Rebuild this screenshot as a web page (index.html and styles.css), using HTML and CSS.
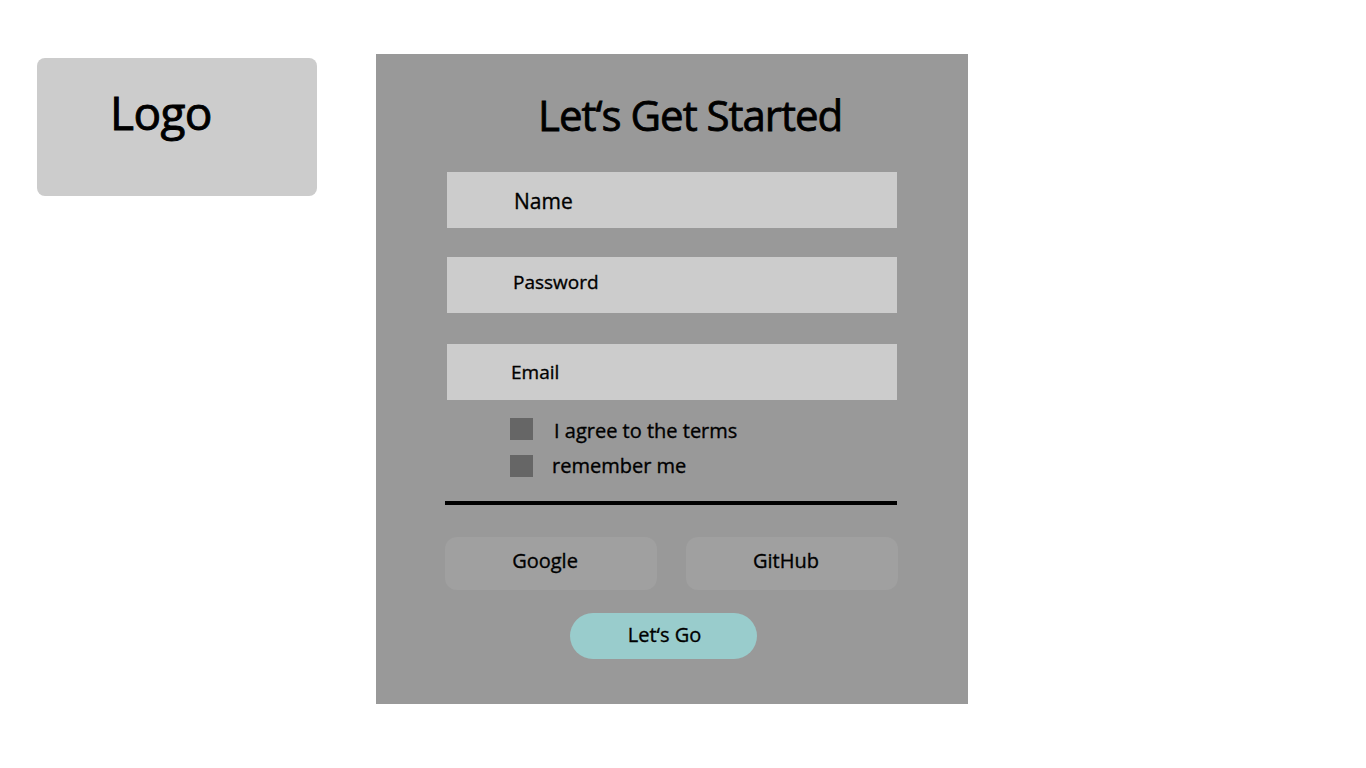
FILE: index.html
```html
<!DOCTYPE html>
<html lang="en">
<head>
<meta charset="utf-8">
<title>Let's Get Started</title>
<link rel="stylesheet" href="styles.css">
</head>
<body>
<div class="page">
  <div class="logo"><span class="logo-text">Logo</span></div>
  <main class="panel">
    <h1 class="title">Let‘s Get Started</h1>
    <div class="field field-name"><span>Name</span></div>
    <div class="field field-pass"><span>Password</span></div>
    <div class="field field-email"><span>Email</span></div>
    <div class="checks">
      <label class="check check-terms"><span class="box"></span><span>I agree to the terms</span></label>
      <label class="check check-remember"><span class="box"></span><span>remember me</span></label>
    </div>
    <div class="divider"></div>
    <div class="socials">
      <div class="social">Google</div>
      <div class="social">GitHub</div>
    </div>
    <div class="go-row"><div class="go">Let‘s Go</div></div>
  </main>
</div>
</body>
</html>
```

FILE: styles.css
```css
* { box-sizing: border-box; }
html, body { margin: 0; padding: 0; background: #ffffff; }
body {
  font-family: "Open Sans", "Noto Sans", sans-serif;
  font-weight: 400;
  color: #000;
  -webkit-text-stroke: 0.35px #000;
}
.page {
  display: flex;
  align-items: flex-start;
  width: 1366px;
  height: 768px;
}
.logo {
  margin-left: 37px;
  margin-top: 58px;
  width: 280px;
  height: 138px;
  background: #cccccc;
  border-radius: 8px;
  padding-left: 73px;
  padding-top: 31px;
}
.logo-text {
  font-size: 46px;
  line-height: 1;
  letter-spacing: -0.6px;
  -webkit-text-stroke: 0.9px #000;
}
.panel {
  margin-left: 59px;
  margin-top: 54px;
  width: 592px;
  height: 650px;
  background: #999999;
  display: flex;
  flex-direction: column;
  padding-left: 71px;
}
.title {
  margin: 35px 0 0 91px;
  font-size: 42px;
  font-weight: 400;
  line-height: 52px;
  height: 52px;
  letter-spacing: -1px;
  -webkit-text-stroke: 0.8px #000;
}
.field {
  width: 450px;
  height: 56px;
  background: #cccccc;
  display: flex;
  align-items: center;
  font-size: 20px;
}
.field-name { margin-top: 31px; padding-left: 67px; font-size: 21px; padding-top: 2px; }
.field-pass { margin-top: 29px; padding-left: 66px; font-size: 19px; padding-bottom: 6px; }
.field-email { margin-top: 31px; padding-left: 64px; font-size: 19px; }
.checks {
  display: flex;
  flex-direction: column;
  gap: 15px;
  margin-top: 18px;
  padding-left: 63px;
}
.check {
  display: flex;
  align-items: center;
  font-size: 20px;
  height: 22px;
}
.box {
  width: 23px;
  height: 22px;
  background: #666666;
  flex: none;
}
.check-terms .box { margin-right: 21px; }
.check-remember .box { margin-right: 19px; }
.check-terms span:last-child { padding-top: 2px; }
.check-remember span:last-child { padding-bottom: 2px; }
.divider {
  margin-top: 24px;
  margin-left: -2px;
  width: 452px;
  height: 4px;
  background: #000000;
}
.socials {
  display: flex;
  gap: 29px;
  margin-top: 32px;
  margin-left: -2px;
}
.social {
  width: 212px;
  height: 53px;
  border-radius: 12px;
  background: #a0a0a0;
  display: flex;
  align-items: center;
  justify-content: center;
  padding-right: 12px;
  padding-bottom: 6px;
  font-size: 20px;
}
.go-row {
  display: flex;
  margin-top: 23px;
  padding-left: 123px;
}
.go {
  width: 187px;
  height: 46px;
  border-radius: 23px;
  background: #99cccc;
  display: flex;
  align-items: center;
  justify-content: center;
  font-size: 20px;
  padding-left: 2px;
  padding-bottom: 3px;
}
```
